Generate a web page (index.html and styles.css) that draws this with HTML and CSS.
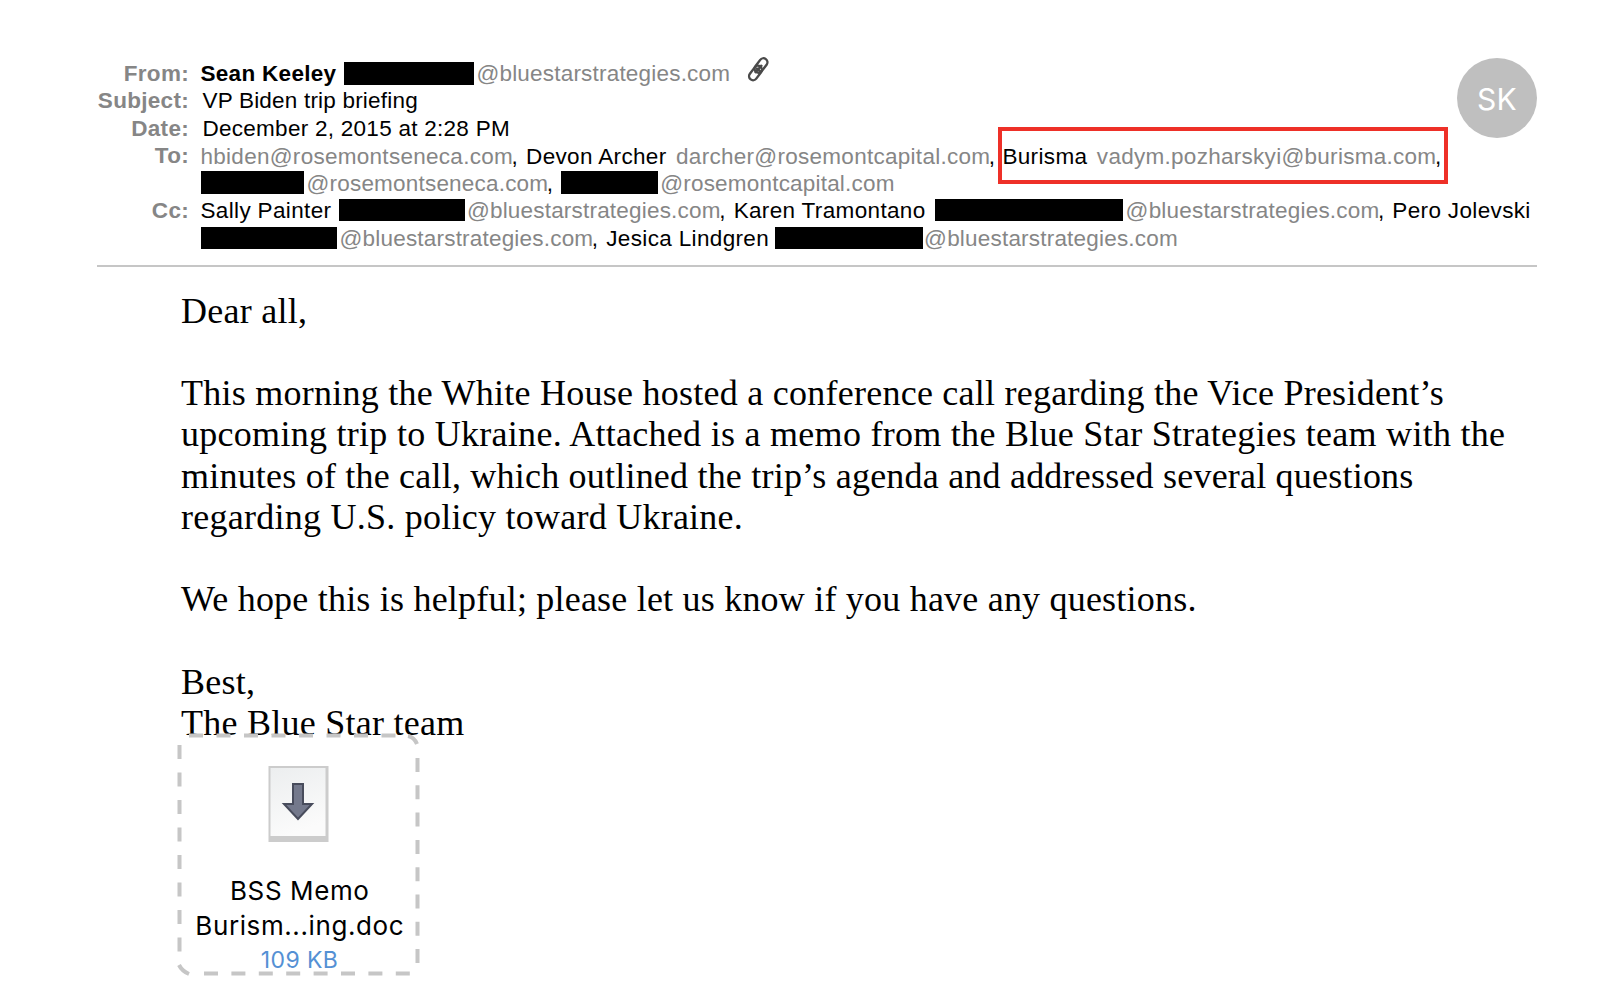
FILE: index.html
```html
<!DOCTYPE html>
<html lang="en">
<head>
    <meta charset="UTF-8">
    <meta name="viewport" content="width=device-width, initial-scale=1.0">
    <title>VP Biden trip briefing</title>
    <link rel="stylesheet" href="styles.css">
</head>
<body>
    <div class="email">
        <!-- Message header -->
        <header class="email-header">
            <div class="fields">
                <div class="label">From:</div>
                <div class="line">
                    <span class="sender">Sean Keeley</span>
                    <span class="redacted tall r-from"></span>
                    <span class="addr">@bluestarstrategies.com</span>
                    <svg class="clip" width="24" height="28" viewBox="0 0 24 28" fill="none" stroke="#4a4a4a" stroke-width="2.4">
                        <rect x="10" y="1.5" width="8" height="16" rx="4" transform="rotate(37 14 9.5)"/>
                        <rect x="4.5" y="9" width="8" height="16" rx="4" transform="rotate(37 8.5 17)"/>
                        <path d="M8 17l7-8M9 12l5 4" stroke-width="2.6"/>
                    </svg>
                </div>

                <div class="label">Subject:</div>
                <div class="line indent"><span class="subject">VP Biden trip briefing</span></div>

                <div class="label">Date:</div>
                <div class="line indent"><span class="date">December 2, 2015 at 2:28 PM</span></div>

                <div class="label">To:</div>
                <div class="line line-to">
                    <span class="addr">hbiden@rosemontseneca.com</span><span class="comma">,</span>
                    <span class="name">Devon Archer</span>
                    <span class="addr after-name">darcher@rosemontcapital.com</span><span class="comma">,</span>
                    <span class="highlight">
                        <span class="name first">Burisma</span>
                        <span class="addr after-name">vadym.pozharskyi@burisma.com</span><span class="comma">,</span>
                    </span>
                </div>

                <div class="line wrapped">
                    <span class="redacted tall r-to1"></span>
                    <span class="addr">@rosemontseneca.com</span><span class="comma">,</span>
                    <span class="redacted tall r-to2"></span>
                    <span class="addr">@rosemontcapital.com</span>
                </div>

                <div class="label">Cc:</div>
                <div class="line">
                    <span class="name first">Sally Painter</span>
                    <span class="redacted r-cc1"></span>
                    <span class="addr">@bluestarstrategies.com</span><span class="comma">,</span>
                    <span class="name">Karen Tramontano</span>
                    <span class="redacted r-cc2"></span>
                    <span class="addr">@bluestarstrategies.com</span><span class="comma">,</span>
                    <span class="name">Pero Jolevski</span>
                </div>

                <div class="line wrapped">
                    <span class="redacted r-cc3"></span>
                    <span class="addr">@bluestarstrategies.com</span><span class="comma">,</span>
                    <span class="name">Jesica Lindgren</span>
                    <span class="redacted r-cc4"></span>
                    <span class="addr">@bluestarstrategies.com</span>
                </div>
            </div>
            <div class="avatar">SK</div>
        </header>

        <!-- Message body -->
        <main class="email-body">
            <p>Dear all,</p>
            <p>
                This morning the White House hosted a conference call regarding the Vice President’s<br>
                <span class="loose">upcoming trip to Ukraine. Attached is a memo from the Blue Star Strategies team with the</span><br>
                <span class="tight">minutes of the call, which outlined the trip’s agenda and addressed several questions</span><br>
                regarding U.S. policy toward Ukraine.
            </p>
            <p class="tight">We hope this is helpful; please let us know if you have any questions.</p>
            <p>Best,<br>The Blue Star team</p>
        </main>

        <!-- Attachment -->
        <div class="attachment">
            <svg class="dashes" width="244" height="244" viewBox="0 0 244 244" fill="none" stroke="#c6c6c6" stroke-width="4">
                <path d="M2.500 12V230" stroke-dasharray="14 13.5"/>
                <path d="M240.500 25V232" stroke-dasharray="14 13.3"/>
                <path d="M12 2.500H220" stroke-dasharray="14 13.5"/>
                <path d="M27 240.500H233" stroke-dasharray="14 13.4"/>
                <path d="M231 3Q237 4 240 11M2 232Q5 238 12 241"/>
            </svg>
            <svg class="file-icon" width="62" height="76" viewBox="0 0 62 76">
                <defs>
                    <linearGradient id="paper" x1="0" y1="0" x2="0.3" y2="1">
                        <stop offset="0" stop-color="#eceeef"/>
                        <stop offset="1" stop-color="#fbfbfb"/>
                    </linearGradient>
                </defs>
                <rect x="0.500" y="0" width="60" height="76" fill="#cccccc"/>
                <rect x="2.500" y="2" width="55" height="68" fill="url(#paper)"/>
                <path d="M25 18h10v20h9L30 53 16 38h9z" fill="#74798c" stroke="#484c5c" stroke-width="2"/>
            </svg>
            <div class="file-name">BSS Memo</div>
            <div class="file-name">Burism...ing.doc</div>
            <div class="file-size">109 KB</div>
        </div>
    </div>
</body>
</html>
```
FILE: styles.css
```css
:root {
    --text-color: #000000;
    --muted-color: #868686;
    --rule-color: #c6c6c6;
    --highlight-color: #ee3028;
    --link-color: #5490d4;
}

* {
    box-sizing: border-box;
}

body {
    margin: 0;
    background-color: #ffffff;
    color: var(--text-color);
    overflow: hidden;
}

.email {
    width: 1440px;
    margin-left: 97px;
    padding-top: 57px;
}

/* Header */
.email-header {
    display: flex;
    justify-content: space-between;
    height: 210px;
    border-bottom: 2px solid var(--rule-color);
    font-family: "Liberation Sans", Arial, sans-serif;
    font-size: 22.5px;
    line-height: 27.5px;
    letter-spacing: 0.2px;
}

.fields {
    display: grid;
    grid-template-columns: 92px 1fr;
    grid-auto-rows: 27.5px;
    column-gap: 11.5px;
    width: 1350px;
    padding-top: 2.7px;
}

.label {
    text-align: right;
    font-weight: bold;
    color: var(--muted-color);
    letter-spacing: 0.3px;
}

.line {
    display: flex;
    white-space: nowrap;
}

.line-to {
    padding-top: 0.5px;
    letter-spacing: 0.28px;
}

.wrapped {
    grid-column: 2;
}

.indent {
    padding-left: 2px;
}

.sender {
    font-weight: bold;
    letter-spacing: 0.3px;
}

.date {
    letter-spacing: 0.27px;
}

.addr {
    color: var(--muted-color);
}

.comma {
    margin-left: -1.5px;
}

.name {
    margin-left: 8px;
    letter-spacing: 0.35px;
}

.name.first {
    margin-left: 0;
}

.after-name {
    margin-left: 9.5px;
}

.redacted {
    height: 22px;
    margin-top: 2px;
    background-color: #000000;
}

.redacted.tall {
    height: 23px;
}

.r-from { width: 130px; margin: 2px 2px 0 8px; }
.r-to1 { width: 103px; margin: 1px 3px 0 0; }
.r-to2 { width: 97px; margin: 1px 2px 0 8px; }
.r-cc1 { width: 126px; margin: 2px 1.5px 0 8px; }
.r-cc2 { width: 188px; margin: 2px 3px 0 9px; }
.r-cc3 { width: 136px; margin: 2px 3px 0 0; }
.r-cc4 { width: 148px; margin: 2px 1px 0 6px; }

.clip {
    margin: -4px 0 0 17px;
}

.highlight {
    display: flex;
    width: 450px;
    height: 57px;
    margin: -16px 0 -14px 2.5px;
    padding: 12px 0 0 0.5px;
    border: 4px solid var(--highlight-color);
}

.avatar {
    flex: none;
    width: 80px;
    height: 80px;
    margin-top: 1px;
    border-radius: 50%;
    background-color: #bfbfbf;
    color: #ffffff;
    font-family: Inter, sans-serif;
    font-size: 30px;
    line-height: 82px;
    text-align: center;
}

/* Body */
.email-body {
    margin: 23.7px 0 0 84px;
    font-family: "Liberation Serif", "Times New Roman", serif;
    font-size: 36px;
    line-height: 41.25px;
    letter-spacing: 0.25px;
    white-space: nowrap;
}

.email-body p {
    margin: 0 0 41.25px;
}

.email-body p:last-child {
    margin: 0;
}

.loose {
    letter-spacing: 0.28px;
}

.email-body .tight {
    letter-spacing: 0.21px;
}

/* Attachment */
.attachment {
    position: relative;
    display: flex;
    flex-direction: column;
    align-items: center;
    width: 244px;
    height: 244px;
    margin: -11.2px 0 0 80px;
    padding-top: 33px;
    font-family: Inter, sans-serif;
    font-size: 26px;
    line-height: 35px;
}

.dashes {
    position: absolute;
    top: 0;
    left: 0;
}

.file-icon {
    margin-bottom: 31px;
}

.file-name {
    padding-left: 1.5px;
    letter-spacing: 0.6px;
}

.file-size {
    padding-left: 1px;
    color: var(--link-color);
    font-size: 23px;
    line-height: 34px;
    letter-spacing: 0.4px;
}
```
